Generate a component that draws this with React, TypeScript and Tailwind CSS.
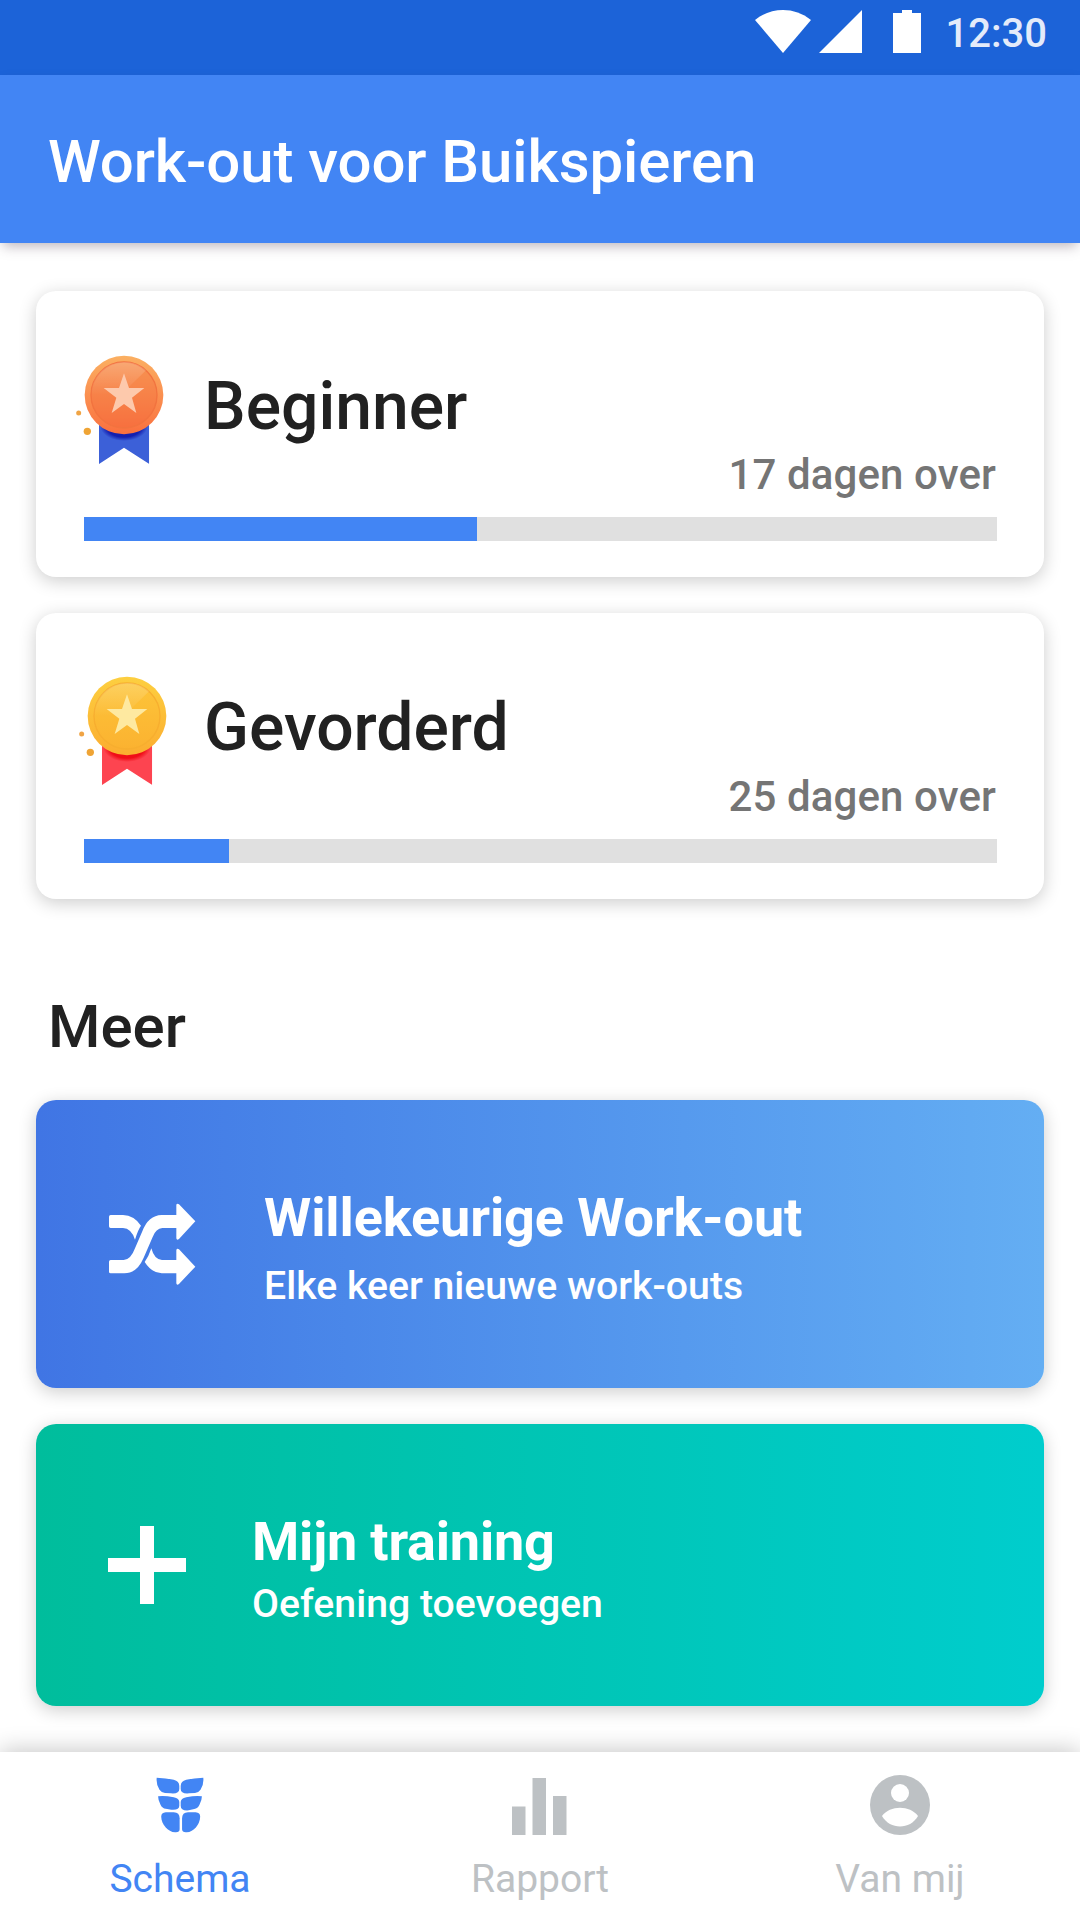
import { useState } from 'react';

interface Level {
    name: string;
    left: string;
    progress: number;
    medal: 'bronze' | 'gold';
}

const levels: Level[] = [
    { name: 'Beginner', left: '17 dagen over', progress: 43, medal: 'bronze' },
    { name: 'Gevorderd', left: '25 dagen over', progress: 15.9, medal: 'gold' },
];

const medals = {
    bronze: { top: '#fbb062', bottom: '#fa703f', ring: '#f2733f', inner: '#f1683a', star: '#fdc9ac', ribbon: '#3c60d8', shade: '#1420b0' },
    gold: { top: '#fdcf40', bottom: '#fbad30', ring: '#f7ae2f', inner: '#fcb830', star: '#fee9a0', ribbon: '#fd4450', shade: '#f00d18' },
};

function StatusBar() {
    return (
        <div className="h-[75px] shrink-0 bg-[#1c63d8] flex items-start pr-[33px] justify-end text-white">
            <svg className="w-[56px] h-[43px] mt-[10px]" viewBox="0 0 168 129" fill="currentColor">
                <path d="M0 30C50-10 118-10 168 30L84 129Z" />
            </svg>
            <svg className="w-[43px] h-[43px] mt-[10px] ml-[8px]" viewBox="0 0 43 43" fill="currentColor">
                <path d="M43 0V43H0Z" />
            </svg>
            <svg className="w-[28px] h-[43px] mt-[10px] ml-[31px]" viewBox="0 0 28 43" fill="currentColor">
                <path d="M9 0H19V3H28V43H0V3H9Z" />
            </svg>
            <span className="ml-[25px] mt-[9px] text-[40px] leading-[50px] font-medium text-[#e3ebfa]">12:30</span>
        </div>
    );
}

function Medal({ type }: { type: 'bronze' | 'gold' }) {
    const c = medals[type];
    return (
        <svg className="w-[90px] h-[112px]" viewBox="-147 -123 270 336">
            <defs>
                <linearGradient id={`${type}-disc`} x1="0" y1="0" x2="0" y2="1">
                    <stop offset="0" stopColor={c.top} />
                    <stop offset="1" stopColor={c.bottom} />
                </linearGradient>
                <linearGradient id={`${type}-shine`} x1="0" y1="0" x2="0" y2="1">
                    <stop offset="0" stopColor="#fff" stopOpacity="0.2" />
                    <stop offset="1" stopColor="#fff" stopOpacity="0" />
                </linearGradient>
                <radialGradient id={`${type}-shade`}>
                    <stop offset="0.75" stopColor={c.shade} />
                    <stop offset="1" stopColor={c.shade} stopOpacity="0" />
                </radialGradient>
                <clipPath id={`${type}-ribbon`}>
                    <path d="M-75 70H76V207L0 158L-75 207Z" />
                </clipPath>
            </defs>
            <circle cx="-136" cy="54" r="7.5" fill="#f0a445" />
            <circle cx="-110" cy="109" r="11" fill="#efa435" />
            <g clipPath={`url(#${type}-ribbon)`}>
                <rect x="-75" y="70" width="151" height="140" fill={c.ribbon} />
                <ellipse cx="0" cy="92" rx="72" ry="46" fill={`url(#${type}-shade)`} />
            </g>
            <circle r="118" fill={`url(#${type}-disc)`} />
            <circle r="99" fill={c.inner} fillOpacity="0.35" stroke={c.ring} strokeWidth="4" />
            <path d="M-99 0A99 99 0 0 1 66-74L-10 0Z" fill={`url(#${type}-shine)`} />
            <path d="M0-65L15-21H61L24 8L37 54L0 27L-37 54L-23 8L-61-21H-15Z" fill={c.star} />
        </svg>
    );
}

function LevelCard({ level }: { level: Level }) {
    return (
        <div className="h-[286px] rounded-[20px] bg-white pl-12 pr-[47px] shadow-[0_4px_18px_rgba(0,0,0,0.2)] flex flex-col">
            <div className={`flex h-[164px] ${level.medal === 'gold' ? '-ml-[6px] gap-[36px]' : '-ml-[9px] gap-[39px]'}`}>
                <div className={level.medal === 'gold' ? 'pt-[62px]' : 'pt-[63px]'}>
                    <Medal type={level.medal} />
                </div>
                <h2 className={`${level.medal === 'gold' ? 'pt-[75px]' : 'pt-[76px]'} text-[66px] leading-[80px] font-medium text-[#212121]`}>{level.name}</h2>
            </div>
            <p className="h-[62px] pr-px text-right leading-[40px] text-[42px] tracking-[0.12px] font-medium text-[#757575]">{level.left}</p>
            <div className="h-6 bg-[#e0e0e0]">
                <div className="h-full bg-[#4285f4]" style={{ width: `${level.progress}%` }} />
            </div>
        </div>
    );
}

function ShuffleIcon() {
    return (
        <svg className="w-[88px] h-[83px]" viewBox="325 370 264 249" fill="#fff">
            <path d="M333 406H370Q403 407 424 438Q415 450 406 480Q395 446 370 445H333Q328 445 328 440V411Q328 406 333 406Z" />
            <path d="M328 546Q328 541 333 541H372Q393 541 406 506L428 455Q446 407 486 406H530V376Q531 369 538 374L587 425L538 478Q531 483 530 476V445H488Q469 446 459 472L432 534Q412 581 374 581H333Q328 581 328 576Z" />
            <path d="M455 506Q464 540 487 541H530V512Q531 505 538 509L587 561L538 613Q531 618 530 611V581H486Q456 580 435 547Q447 531 455 506Z" />
        </svg>
    );
}

function AbsIcon() {
    return (
        <svg className="w-[48px] h-[56px]" viewBox="452 232 138 168" preserveAspectRatio="none" fill="currentColor">
            <path d="M454 234Q480 235 503 240Q519 244 519 259V268Q519 283 495 281L478 280Q468 279 462 270Q452 255 454 234Z" />
            <path d="M588 234Q562 235 539 240Q523 244 523 259V268Q523 283 547 281L564 280Q574 279 580 270Q590 255 588 234Z" />
            <path d="M458 290Q475 287 503 293Q519 297 519 307V318Q519 332 496 330L480 327Q470 326 465 315Q458 302 458 290Z" />
            <path d="M584 290Q567 287 539 293Q523 297 523 307V318Q523 334 546 332L562 328Q572 326 577 315Q584 302 584 290Z" />
            <path d="M467 351Q467 339 480 338H503Q520 338 520 356V389Q520 399 507 398C486 396 468 375 467 351Z" />
            <path d="M579 351Q579 339 566 338H544Q527 338 527 356V389Q527 399 540 398C561 396 578 375 579 351Z" />
        </svg>
    );
}

function ChartIcon() {
    return (
        <svg className="w-[56px] h-[60px]" viewBox="0 0 56 60" fill="currentColor">
            <path d="M0 31.5H13.5V60H0ZM20.5 3H34V60H20.5ZM41 21H54.5V60H41Z" />
        </svg>
    );
}

function UserIcon() {
    return (
        <svg className="w-[60px] h-[60px]" viewBox="0 0 60 60">
            <circle cx="30" cy="30" r="30" fill="currentColor" />
            <circle cx="30" cy="18" r="9" fill="#fff" />
            <path d="M12 41C20 30 40 30 48 41C40 55 20 55 12 41Z" fill="#fff" />
        </svg>
    );
}

const tabs = [
    { label: 'Schema', icon: <AbsIcon /> },
    { label: 'Rapport', icon: <ChartIcon /> },
    { label: 'Van mij', icon: <UserIcon /> },
];

export default function App() {
    const [active, setActive] = useState(0);

    return (
        <div className="w-[1080px] h-[1920px] bg-white flex flex-col overflow-hidden font-['Roboto',sans-serif]">
            <StatusBar />
            <header className="h-[168px] shrink-0 bg-[#4285f4] pl-12 pt-[52px] shadow-[0_6px_12px_-3px_rgba(60,40,60,0.35)]">
                <h1 className="text-[60px] leading-[70px] tracking-[-0.1px] font-medium text-white">Work-out voor Buikspieren</h1>
            </header>

            <main className="h-[1509px] shrink-0 px-9 pt-12 flex flex-col">
                <div className="flex flex-col gap-9">
                    {levels.map((level) => (
                        <LevelCard key={level.name} level={level} />
                    ))}
                </div>

                <h2 className="h-[201px] pt-[93px] pl-3 text-[60px] leading-[70px] font-medium text-[#212121]">Meer</h2>

                <div className="h-[288px] rounded-[20px] bg-linear-to-r from-[#4075e4] to-[#64aef3] shadow-[0_4px_18px_rgba(0,0,0,0.2)] flex text-white">
                    <div className="w-[228px] pl-[72px] pt-[103px]">
                        <ShuffleIcon />
                    </div>
                    <div className="pt-[85px]">
                        <h3 className="text-[54px] leading-[66px] tracking-[-0.1px] font-bold">Willekeurige Work-out</h3>
                        <p className="mt-[11px] text-[39.2px] leading-[48px] font-medium">Elke keer nieuwe work-outs</p>
                    </div>
                </div>

                <div className="mt-9 h-[282px] rounded-[20px] bg-linear-to-r from-[#00bd9c] to-[#00cdcd] shadow-[0_4px_18px_rgba(0,0,0,0.2)] flex text-white">
                    <div className="w-[216px] pl-[72px] pt-[102px]">
                        <svg className="w-[78px] h-[78px]" viewBox="0 0 78 78" fill="#fff">
                            <path d="M32 0H46V32H78V46H46V78H32V46H0V32H32Z" />
                        </svg>
                    </div>
                    <div className="pt-[85px]">
                        <h3 className="text-[54px] leading-[66px] tracking-[-0.2px] font-bold">Mijn training</h3>
                        <p className="mt-[5px] text-[39.2px] leading-[48px] font-medium">Oefening toevoegen</p>
                    </div>
                </div>
            </main>

            <nav className="h-[168px] shrink-0 bg-white shadow-[0_-2px_22px_rgba(0,0,0,0.22)] grid grid-cols-3">
                {tabs.map((tab, i) => (
                    <button
                        key={tab.label}
                        type="button"
                        onClick={() => setActive(i)}
                        className={`flex flex-col items-center pt-[21px] ${active === i ? 'text-[#4285f4]' : 'text-[#bdc1c4]'}`}
                    >
                        <span className="h-[64px] flex items-center">{tab.icon}</span>
                        <span className="mt-[18px] text-[39px] leading-[48px]">{tab.label}</span>
                    </button>
                ))}
            </nav>
        </div>
    );
}
